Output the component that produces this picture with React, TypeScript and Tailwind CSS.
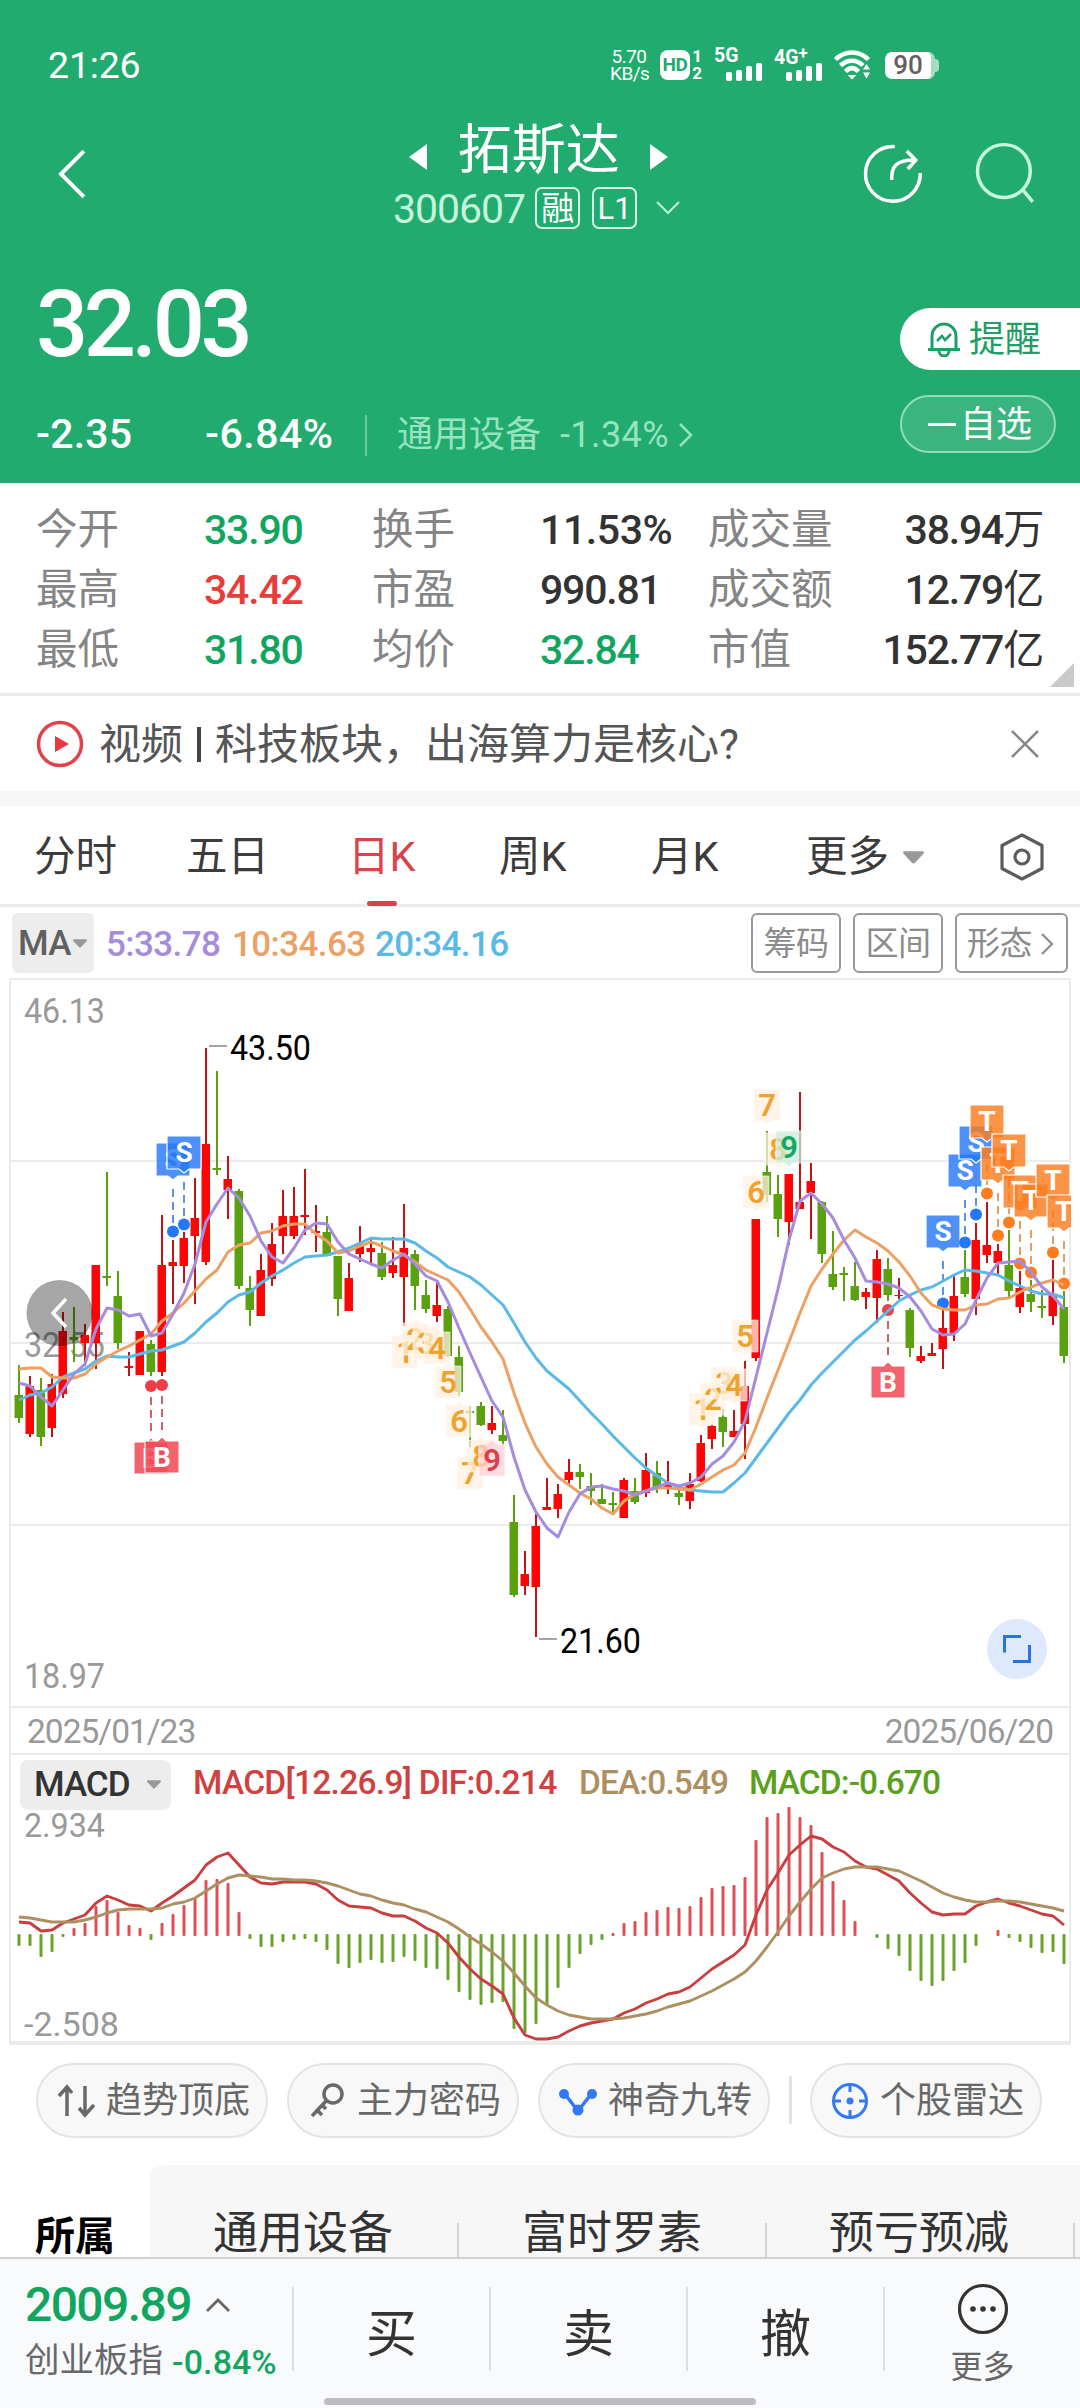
import type { ReactNode } from "react";

const STEP = 11;
const X0 = 19;
const xAt = (i: number) => X0 + i * STEP;

const RED = "#fb0505";
const GREEN = "#5ba00f";

// [direction, high, body top, body bottom, low]
type Candle = ["r" | "g", number, number, number, number];

const candles: Candle[] = [
  ["g", 1365, 1395, 1418, 1423], ["r", 1376, 1386, 1434, 1437], ["g", 1378, 1390, 1437, 1446], ["r", 1374, 1384, 1428, 1437],
  ["r", 1312, 1331, 1394, 1398], ["g", 1307, 1337, 1340, 1362], ["r", 1324, 1335, 1343, 1366], ["r", 1265, 1265, 1343, 1369],
  ["g", 1172, 1276, 1278, 1286], ["g", 1271, 1296, 1343, 1349], ["r", 1352, 1366, 1368, 1376], ["r", 1331, 1331, 1375, 1375],
  ["g", 1340, 1344, 1372, 1376], ["r", 1215, 1265, 1372, 1376], ["r", 1240, 1262, 1266, 1304], ["r", 1232, 1238, 1266, 1283],
  ["r", 1178, 1218, 1236, 1304], ["r", 1048, 1144, 1262, 1265], ["g", 1071, 1168, 1170, 1175], ["r", 1156, 1179, 1190, 1219],
  ["g", 1189, 1191, 1286, 1289], ["g", 1276, 1288, 1310, 1326], ["r", 1254, 1270, 1316, 1316], ["r", 1223, 1244, 1279, 1286],
  ["r", 1190, 1216, 1236, 1254], ["r", 1187, 1216, 1236, 1239], ["r", 1169, 1215, 1217, 1235], ["r", 1205, 1231, 1233, 1252],
  ["g", 1216, 1232, 1256, 1256], ["g", 1256, 1256, 1299, 1316], ["r", 1263, 1278, 1311, 1311], ["r", 1226, 1245, 1254, 1262],
  ["r", 1237, 1248, 1252, 1263], ["g", 1242, 1253, 1277, 1280], ["r", 1237, 1265, 1273, 1278], ["r", 1204, 1248, 1277, 1326],
  ["g", 1250, 1254, 1286, 1310], ["g", 1280, 1295, 1309, 1313], ["r", 1280, 1305, 1316, 1322], ["g", 1306, 1309, 1356, 1357],
  ["g", 1346, 1357, 1392, 1396], ["g", 1406, 1411, 1413, 1447], ["g", 1402, 1406, 1425, 1426], ["r", 1406, 1423, 1430, 1434],
  ["g", 1410, 1435, 1441, 1445], ["g", 1495, 1522, 1595, 1597], ["r", 1551, 1574, 1586, 1595], ["r", 1514, 1526, 1587, 1637],
  ["r", 1478, 1507, 1510, 1510], ["r", 1484, 1494, 1509, 1518], ["r", 1459, 1472, 1480, 1484], ["g", 1464, 1472, 1477, 1489],
  ["g", 1473, 1486, 1491, 1505], ["g", 1484, 1499, 1504, 1504], ["g", 1492, 1503, 1505, 1512], ["r", 1478, 1480, 1518, 1518],
  ["g", 1478, 1491, 1502, 1504], ["r", 1453, 1470, 1493, 1497], ["g", 1461, 1473, 1488, 1493], ["r", 1461, 1485, 1488, 1494],
  ["g", 1486, 1493, 1497, 1505], ["r", 1473, 1484, 1501, 1509], ["r", 1435, 1443, 1481, 1482], ["r", 1424, 1426, 1439, 1449],
  ["g", 1409, 1417, 1432, 1447], ["r", 1410, 1431, 1437, 1437], ["r", 1361, 1386, 1424, 1459], ["r", 1219, 1219, 1358, 1361],
  ["g", 1131, 1172, 1195, 1202], ["g", 1175, 1194, 1219, 1237], ["r", 1174, 1174, 1222, 1245], ["r", 1092, 1202, 1209, 1209],
  ["r", 1163, 1181, 1193, 1239], ["g", 1201, 1202, 1254, 1263], ["g", 1231, 1274, 1287, 1290], ["g", 1267, 1273, 1275, 1301],
  ["g", 1262, 1286, 1300, 1301], ["r", 1288, 1292, 1297, 1309], ["r", 1250, 1259, 1298, 1323], ["g", 1258, 1269, 1295, 1301],
  ["r", 1278, 1295, 1296, 1299], ["g", 1308, 1310, 1348, 1357], ["r", 1346, 1356, 1361, 1363], ["r", 1343, 1353, 1356, 1356],
  ["r", 1307, 1328, 1349, 1369], ["r", 1276, 1296, 1333, 1341], ["g", 1250, 1277, 1294, 1297], ["r", 1223, 1240, 1299, 1315],
  ["r", 1202, 1245, 1255, 1263], ["r", 1244, 1251, 1263, 1275], ["g", 1230, 1265, 1291, 1297], ["r", 1271, 1288, 1307, 1313],
  ["g", 1280, 1294, 1302, 1312], ["g", 1290, 1306, 1308, 1318], ["r", 1260, 1295, 1316, 1325], ["g", 1291, 1307, 1356, 1363],
];

const ma5 = [
  1383, 1386, 1397, 1406, 1390, 1374, 1364, 1329, 1308, 1310, 1316, 1314, 1336, 1333, 1314, 1293, 1264, 1222, 1204, 1188, 1198, 1216, 1241, 1257,
  1263, 1248, 1230, 1223, 1224, 1242, 1254, 1259, 1264, 1268, 1260, 1254, 1264, 1276, 1281, 1302, 1328, 1353, 1377, 1401, 1417, 1457, 1490, 1512,
  1528, 1537, 1512, 1494, 1487, 1486, 1489, 1491, 1495, 1491, 1487, 1483, 1486, 1483, 1477, 1464, 1456, 1442, 1421, 1377, 1333, 1289, 1240, 1201,
  1193, 1204, 1218, 1240, 1258, 1281, 1282, 1284, 1288, 1297, 1311, 1329, 1335, 1334, 1324, 1300, 1278, 1263, 1262, 1261, 1272, 1287, 1296, 1309,
];
const ma10 = [
  1369, 1368, 1368, 1377, 1378, 1378, 1374, 1364, 1357, 1351, 1346, 1340, 1334, 1321, 1313, 1303, 1291, 1279, 1270, 1252, 1245, 1243, 1233, 1231,
  1226, 1224, 1224, 1234, 1241, 1253, 1251, 1246, 1242, 1246, 1251, 1255, 1262, 1270, 1275, 1280, 1292, 1309, 1327, 1342, 1359, 1393, 1423, 1447,
  1464, 1477, 1485, 1493, 1499, 1508, 1514, 1501, 1494, 1491, 1488, 1488, 1489, 1490, 1484, 1477, 1470, 1465, 1453, 1427, 1398, 1370, 1342, 1313,
  1286, 1269, 1254, 1240, 1230, 1237, 1243, 1251, 1262, 1276, 1293, 1305, 1309, 1310, 1310, 1305, 1304, 1299, 1298, 1292, 1287, 1283, 1280, 1285,
];
const ma20 = [
  1400, 1395, 1393, 1387, 1377, 1373, 1369, 1361, 1356, 1357, 1357, 1354, 1351, 1350, 1346, 1342, 1333, 1322, 1313, 1302, 1295, 1292, 1283, 1276,
  1270, 1263, 1257, 1256, 1255, 1252, 1248, 1243, 1238, 1239, 1239, 1239, 1243, 1251, 1258, 1267, 1272, 1277, 1285, 1295, 1305, 1323, 1342, 1358,
  1371, 1380, 1389, 1401, 1413, 1424, 1436, 1447, 1458, 1468, 1476, 1483, 1487, 1490, 1491, 1492, 1492, 1483, 1473, 1458, 1443, 1428, 1413, 1400,
  1385, 1373, 1362, 1351, 1340, 1331, 1321, 1311, 1301, 1295, 1290, 1287, 1281, 1275, 1270, 1271, 1273, 1275, 1281, 1286, 1291, 1294, 1294, 1298,
];

// histogram bar ends, 0 where the day has no bar
const hist = [
  1946, 1946, 1957, 1952, 1937, 1928, 1923, 1906, 1900, 1912, 1925, 1928, 1940, 1923, 1914, 1905, 1898, 1880, 1879, 1883, 1912, 1939, 1947, 1947,
  1942, 1940, 1939, 1942, 1950, 1964, 1968, 1963, 1960, 1963, 1962, 1957, 1961, 1968, 1969, 1980, 1992, 2000, 2005, 2003, 2002, 2029, 2033, 2024,
  2005, 1988, 1968, 1954, 1945, 1940, 1933, 1923, 1921, 1912, 1910, 1907, 1908, 1906, 1897, 1888, 1886, 1885, 1877, 1840, 1817, 1813, 1807, 1817,
  1825, 1852, 1881, 1900, 1921, 0, 1938, 1949, 1956, 1971, 1981, 1986, 1981, 1971, 1963, 1946, 0, 1930, 1938, 1942, 1948, 1953, 1952, 1964,
];
const dif = [
  1922, 1923, 1931, 1930, 1923, 1919, 1915, 1903, 1896, 1900, 1905, 1906, 1911, 1903, 1896, 1888, 1880, 1865, 1857, 1853, 1865, 1877, 1883, 1884,
  1882, 1882, 1882, 1884, 1890, 1900, 1906, 1907, 1908, 1913, 1916, 1916, 1921, 1928, 1933, 1943, 1957, 1969, 1979, 1986, 1994, 2018, 2035, 2039,
  2039, 2037, 2031, 2026, 2023, 2021, 2019, 2013, 2009, 2003, 1999, 1994, 1992, 1987, 1978, 1969, 1962, 1955, 1945, 1915, 1890, 1873, 1855, 1845,
  1836, 1839, 1847, 1852, 1861, 1867, 1869, 1875, 1881, 1893, 1903, 1912, 1915, 1914, 1914, 1906, 1902, 1899, 1903, 1906, 1910, 1914, 1916, 1925,
];
const dea = [
  1917, 1918, 1920, 1922, 1922, 1922, 1920, 1917, 1913, 1910, 1909, 1909, 1909, 1908, 1904, 1902, 1898, 1891, 1884, 1878, 1875, 1876, 1877, 1879,
  1879, 1880, 1880, 1881, 1883, 1886, 1890, 1894, 1896, 1900, 1903, 1905, 1909, 1912, 1917, 1922, 1929, 1937, 1944, 1952, 1961, 1973, 1986, 1998,
  2005, 2011, 2015, 2017, 2019, 2019, 2019, 2018, 2016, 2014, 2011, 2007, 2004, 2001, 1996, 1991, 1985, 1979, 1972, 1961, 1947, 1932, 1916, 1902,
  1889, 1878, 1873, 1869, 1867, 1867, 1867, 1869, 1871, 1876, 1881, 1887, 1893, 1897, 1900, 1902, 1902, 1901, 1901, 1902, 1904, 1906, 1908, 1911,
];

const toPoints = (ys: number[]) => ys.map((y, i) => `${xAt(i)},${y}`).join(" ");

// nine-turn counters: [digit, x, centre y]
const turnsDown: [string, number, number][] = [
  ["1", 405, 1352], ["2", 415, 1339], ["3", 426, 1343], ["4", 437, 1348], ["5", 448, 1382],
  ["6", 459, 1421], ["7", 470, 1473], ["8", 481, 1456], ["9", 492, 1460],
];
const turnsUp: [string, number, number][] = [
  ["1", 702, 1409], ["2", 713, 1399], ["3", 724, 1383], ["4", 734, 1385], ["5", 745, 1336],
  ["6", 756, 1192], ["7", 767, 1105], ["8", 778, 1149], ["9", 789, 1147],
];

// trades drawn above the candles: [letter, x, flag top]
const flags: ["S" | "T", number, number][] = [
  ["S", 173, 1143], ["S", 184, 1136], ["S", 943, 1215], ["S", 965, 1154], ["S", 976, 1126], ["T", 987, 1105], ["T", 998, 1147],
  ["T", 1009, 1134], ["T", 1020, 1175], ["T", 1031, 1184], ["T", 1053, 1164], ["T", 1064, 1195],
];
// trades below: [x, dot y, flag top]
const buys = [[151, 1386, 1442], [162, 1385, 1441], [888, 1310, 1366]];

function Turn({ d, x, y, up }: { d: string; x: number; y: number; up?: boolean }) {
  const nine = d === "9";
  const bg = nine ? (up ? "#c9ecdb" : "#ffd0d4") : "#fff0df";
  const fg = nine ? (up ? "#12a862" : "#dc3f4c") : "#f0a22e";
  const tip = up
    ? `M${x - 13} ${y - 16}h26v32h-9l-4 4l-4 -4h-9z`
    : `M${x - 13} ${y + 16}h26v-32h-9l-4 -4l-4 4h-9z`;
  return (
    <g>
      <path d={tip} fill={bg} fillOpacity="0.75" stroke="#fff" strokeOpacity="0.6" />
      <text x={x} y={y + 11} fill={fg} fontSize="31" fontWeight="600" textAnchor="middle">{d}</text>
    </g>
  );
}

function KLine() {
  return (
    <svg className="block h-[728px] w-full" viewBox="0 978 1080 728" fontFamily='Roboto, "Liberation Sans", sans-serif'>
      <clipPath id="plot">
        <rect x="10" y="978" width="1061" height="728" />
      </clipPath>
      <g stroke="#ebebeb" strokeWidth="2" fill="none">
        <path d="M10 979H1070M10 1161H1070M10 1343H1070M10 1525H1070M10 978V1706M1070 978V1706" />
      </g>
      <g fill="#999" fontSize="34.5">
        <text x="24" y="1023" textLength="81" lengthAdjust="spacingAndGlyphs">46.13</text>
        <text x="24" y="1357" textLength="81" lengthAdjust="spacingAndGlyphs">32.55</text>
        <text x="24" y="1688" textLength="81" lengthAdjust="spacingAndGlyphs">18.97</text>
      </g>

      <g clipPath="url(#plot)">
        {candles.map(([dir, hi, top, bottom, lo], i) => (
          <g key={i}>
            <rect x={xAt(i) - 1} y={hi} width="2" height={lo - hi} fill={dir === "r" ? "#c11414" : GREEN} />
            <rect x={xAt(i) - 4.5} y={top} width="8.5" height={bottom - top} fill={dir === "r" ? RED : GREEN} />
          </g>
        ))}

        <circle cx="59.5" cy="1313" r="33" fill="#000" fillOpacity="0.35" />
        <path d="M66 1299L53 1313L66 1327" stroke="#fff" strokeWidth="3.5" fill="none" />

        <g stroke="#888" strokeWidth="1.5">
          <path d="M209 1046H227M539 1639H557" />
        </g>
        <g fill="#000" fontSize="34.5">
          <text x="230" y="1060" textLength="81" lengthAdjust="spacingAndGlyphs">43.50</text>
          <text x="560" y="1653" textLength="81" lengthAdjust="spacingAndGlyphs">21.60</text>
        </g>

        {turnsDown.map(([d, x, y]) => <Turn key={x} d={d} x={x} y={y} />)}
        {turnsUp.map(([d, x, y]) => <Turn key={x} d={d} x={x} y={y} up />)}

        {buys.map(([x, dot, top]) => (
          <g key={x}>
            <circle cx={x} cy={dot} r="6" fill="#ec3e48" />
            <path d={`M${x} ${dot + 11}V${top - 6}`} stroke="#c9525b" strokeWidth="1.8" strokeDasharray="8 5" />
            <path d={`M${x - 17} ${top}h13l4 -4l4 4h13v32h-34z`} fill="#f04a55" fillOpacity="0.86" stroke="#fff" strokeWidth="1" />
            <text x={x} y={top + 26} fill="#fff" fontSize="28" fontWeight="700" textAnchor="middle">B</text>
          </g>
        ))}
        {flags.map(([letter, x, top]) => {
          const color = letter === "S" ? "#2478f6" : "#fb7d1e";
          return (
            <g key={x}>
              <path d={`M${x} ${top + 46}v36`} stroke={letter === "S" ? "#4b8ae0" : "#e39355"} strokeWidth="1.8" strokeDasharray="8 5" />
              <circle cx={x} cy={top + 88.5} r="6" fill={color} />
              <path d={`M${x - 17} ${top}h34v33h-12l-5 4l-5 -4h-12z`} fill={color} fillOpacity="0.82" stroke="#fff" strokeWidth="1.2" />
              <text x={x} y={top + 26} fill="#fff" fontSize="28" fontWeight="700" textAnchor="middle">{letter}</text>
            </g>
          );
        })}
        <g fill="none" strokeWidth="3" strokeLinejoin="round">
          <polyline points={toPoints(ma20)} stroke="#5ab9e6" />
          <polyline points={toPoints(ma10)} stroke="#eda063" />
          <polyline points={toPoints(ma5)} stroke="#a58cdc" />
        </g>
      </g>

      <circle cx="1017" cy="1649" r="30" fill="#dfe9fd" />
      <path d="M1004.500 1652.500V1636.500H1021M1029.500 1645V1661.500H1013" stroke="#2d72e4" strokeWidth="3" fill="none" />
    </svg>
  );
}

function Macd() {
  return (
    <svg className="block h-[231px] w-full overflow-visible" viewBox="0 1810 1080 231" fontFamily='Roboto, "Liberation Sans", sans-serif'>
      <g fill="#999" fontSize="33.500">
        <text x="24" y="1837" textLength="81" lengthAdjust="spacingAndGlyphs">2.934</text>
        <text x="24" y="2036" textLength="95" lengthAdjust="spacingAndGlyphs">-2.508</text>
      </g>
      {hist.map((y, i) =>
        y === 0 ? null : y < 1935 ? (
          <rect key={i} x={xAt(i) - 1.5} y={y} width="3" height={1936 - y} rx="1" fill="#dd5055" />
        ) : (
          <rect key={i} x={xAt(i) - 1.5} y="1934" width="3" height={y - 1934} rx="1" fill="#68a42c" />
        )
      )}
      <g fill="none" strokeWidth="2.900" strokeLinejoin="round">
        <polyline points={toPoints(dif)} stroke="#c93f3f" />
        <polyline points={toPoints(dea)} stroke="#ad8f62" />
      </g>
    </svg>
  );
}

function SignalBars() {
  return (
    <svg className="ml-[12px] h-[18px] w-[36px]" viewBox="0 0 36 18" fill="#fff">
      <rect x="0" y="9" width="6" height="9" rx="2" />
      <rect x="10" y="7" width="6" height="11" rx="2" />
      <rect x="20" y="3" width="6" height="15" rx="2" />
      <rect x="30" y="0" width="6" height="18" rx="2" />
    </svg>
  );
}

function StatusBar() {
  return (
    <div className="flex h-[130px] items-center pr-[141px] pl-[48px]">
      <span className="text-[37.500px] tracking-[-0.200px]">21:26</span>
      <div className="ml-auto flex items-center">
        <div className="w-[38px] text-center text-[19px] leading-[17px] tracking-[-0.500px] whitespace-nowrap">
          5.70
          <br />
          KB/s
        </div>
        <div className="ml-[12px] flex h-[30px] w-[30px] items-center justify-center rounded-[8px] bg-white text-[19px] font-bold tracking-[-0.500px] text-[#22ab6e]">HD</div>
        <div className="ml-[2px] w-[10px] text-right text-[17px] leading-[17px] font-bold">1<br />2</div>
        <div className="ml-[12px] flex h-[31px] w-[48px] flex-col">
          <span className="h-[13px] text-[19.500px] leading-[12px] font-bold">5G</span>
          <SignalBars />
        </div>
        <div className="ml-[12px] flex h-[31px] w-[48px] flex-col">
          <span className="h-[13px] text-[19.500px] leading-[12px] font-bold whitespace-nowrap">4G<sup className="top-[-5px] text-[17px] leading-none">+</sup></span>
          <SignalBars />
        </div>
        <svg className="ml-[12px] h-[30px] w-[38px]" viewBox="0 0 38 30" fill="none" stroke="#fff" strokeWidth="4.500">
          <path d="M1.500 9.500C11 0 25 0 34.500 9.500" />
          <path d="M6.500 15.500C13.500 9 22.500 9 29 15.500" />
          <path d="M11.500 21.500C16 17 20 17 24.500 21.500" />
          <path d="M18 29.500L13.500 25H22.500Z" fill="#fff" stroke="none" />
          <path d="M32.500 14L29 19.500H36ZM32.500 28.500L29 22.500H36Z" fill="#fff" stroke="none" />
        </svg>
        <div className="ml-[13px] flex h-[27px] w-[50px] items-center justify-center rounded-[7px] border-r-[4px] border-[#a6dcc4] bg-white text-[26px] leading-none font-medium text-[#656060]">90</div>
        <div className="h-[13px] w-[4px] rounded-r bg-[#a6dcc4]" />
      </div>
    </div>
  );
}

function Header() {
  return (
    <header className="h-[483px] bg-[#22ab6e] text-white">
      <StatusBar />
      <div className="flex h-[110px] pr-[43px] pl-[57px]">
        <svg className="mt-[19px] h-[50px] w-[30px]" viewBox="0 0 30 50" fill="none" stroke="#fff" strokeWidth="4">
          <path d="M27 2L4 25L27 48" />
        </svg>
        <div className="ml-[297px] w-[310px]">
          <div className="flex h-[42px] items-center justify-center">
            <svg className="mt-[11px] h-[26px] w-[18px]" viewBox="0 0 18 26" fill="#fff"><path d="M18 0V26L0 13Z" /></svg>
            <span className="mr-[30px] ml-[31px] text-[54px] leading-[42px]">拓斯达</span>
            <svg className="mt-[11px] h-[26px] w-[18px]" viewBox="0 0 18 26" fill="#fff"><path d="M0 0V26L18 13Z" /></svg>
          </div>
          <div className="mt-[14px] flex h-[44px] items-center pl-[9px]">
            <span className="pt-[4px] text-[41px] tracking-[-1px] text-[#c5f3db]">300607</span>
            <span className="ml-[10px] flex h-[42px] w-[45px] items-center justify-center rounded-[7px] border-2 border-[#d5f5e5] text-[33px] leading-none">融</span>
            <span className="ml-[12px] flex h-[42px] w-[45px] items-center justify-center rounded-[7px] border-2 border-[#d5f5e5] text-[31px] leading-none">L1</span>
            <svg className="ml-[18px] h-[14px] w-[26px]" viewBox="0 0 26 14" fill="none" stroke="#bdf0d6" strokeWidth="2.200"><path d="M2 1L13 12L24 1" /></svg>
          </div>
        </div>
        <svg className="mt-[12px] ml-[169px] h-[62px] w-[62px]" viewBox="0 0 62 62" fill="none" stroke="#fff" strokeWidth="3.500">
          <path d="M33 4.500A27.500 27.500 0 1 0 58.500 31" />
          <path d="M30 38C29 25 34 18 52 18M45 9L54 18L46 27" />
        </svg>
        <svg className="mt-[12px] ml-[52px] h-[62px] w-[62px]" viewBox="0 0 62 62" fill="none" stroke="#c5f7dd" strokeWidth="3.500">
          <circle cx="29" cy="29" r="26.500" />
          <path d="M48 48L58 60" />
        </svg>
      </div>
      <div className="flex h-[243px] justify-between">
        <div className="pl-[36px]">
          <div className="mt-[37px] h-[96px] text-[92px] leading-[96px] font-medium tracking-[-4.500px]">32.03</div>
          <div className="mt-[37px] flex h-[50px] items-center font-medium">
            <span className="w-[169px] text-[41px] tracking-[0.200px]">-2.35</span>
            <span className="w-[160px] text-[41px] tracking-[0.500px]">-6.84%</span>
            <span className="h-[41px] w-[2px] bg-[#6cc9a0]" />
            <span className="ml-[30px] flex items-center font-normal text-[#97e2bf]">
              <span className="text-[36px] leading-none">通用设备</span>
              <span className="ml-[19px] text-[36px] tracking-[0.400px]">-1.34%</span>
              <svg className="ml-[10px] h-[24px] w-[14px]" viewBox="0 0 14 24" fill="none" stroke="#97e2bf" strokeWidth="2.500"><path d="M1 1L12 12L1 23" /></svg>
            </span>
          </div>
        </div>
        <div className="flex w-[180px] flex-col pt-[68px]">
          <div className="flex h-[62px] items-center rounded-l-full bg-white pl-[27px] text-[#209e65]">
            <svg className="h-[36px] w-[34px]" viewBox="0 0 34 36" fill="none" stroke="#209e65" strokeWidth="3">
              <path d="M5 28V15A12 12 0 0 1 29 15V28M1 28.500H33M12 30A5 5 0 0 0 22 30" />
              <path d="M10 20L15 15L18 19L24 13" strokeWidth="2.500" />
            </svg>
            <span className="ml-[8px] pt-[2px] text-[36px] leading-none">提醒</span>
          </div>
          <div className="mt-[25px] flex h-[58px] w-[156px] items-center rounded-full border-2 border-[#8fdcb9] bg-[#3ab57f] pl-[26px]">
            <span className="h-[3px] w-[28px] bg-white" />
            <span className="ml-[4px] pt-[2px] text-[36px] leading-none">自选</span>
          </div>
        </div>
      </div>
    </header>
  );
}

const quoteRows = [
  { a: ["今开", "33.90", "text-[#10a65f]"], b: ["换手", "11.53%", "text-[#333]"], c: ["成交量", "38.94万"] },
  { a: ["最高", "34.42", "text-[#ea3d3b]"], b: ["市盈", "990.81", "text-[#333]"], c: ["成交额", "12.79亿"] },
  { a: ["最低", "31.80", "text-[#10a65f]"], b: ["均价", "32.84", "text-[#10a65f]"], c: ["市值", "152.77亿"] },
];

function Quotes() {
  return (
    <section className="relative h-[213px] border-b-[3px] border-[#ebebeb] pt-[17px] pr-[37px] pl-[36px] text-[41px]">
      {quoteRows.map((row) => (
        <div key={row.a[0]} className="flex h-[60px] items-center leading-none font-medium tracking-[-1.200px]">
          <span className="w-[168px] text-[41.500px] font-normal tracking-normal text-[#858585]">{row.a[0]}</span>
          <span className={`w-[168px] ${row.a[2]}`}>{row.a[1]}</span>
          <span className="w-[168px] text-[41.500px] font-normal tracking-normal text-[#858585]">{row.b[0]}</span>
          <span className={`w-[168px] ${row.b[1].endsWith("%") ? "tracking-[-0.400px]" : ""} ${row.b[2]}`}>{row.b[1]}</span>
          <span className="text-[41.500px] font-normal tracking-normal text-[#858585]">{row.c[0]}</span>
          <span className="ml-auto text-[#333]">
            {row.c[1].slice(0, -1)}
            <span className="font-normal">{row.c[1].slice(-1)}</span>
          </span>
        </div>
      ))}
      <svg className="absolute right-[6px] bottom-[6px] h-[24px] w-[24px]" viewBox="0 0 24 24"><path d="M24 0V24H0Z" fill="#c9c9c9" /></svg>
    </section>
  );
}

function News() {
  return (
    <section className="flex h-[110px] items-center border-b-[15px] border-[#f7f7f7] pr-[41px] pl-[36px]">
      <svg className="h-[48px] w-[48px]" viewBox="0 0 48 48">
        <circle cx="24" cy="24" r="21.500" fill="none" stroke="#e0434b" strokeWidth="3.500" />
        <path d="M19 16V32L33 24Z" fill="#ea3841" />
      </svg>
      <span className="ml-[15px] flex items-center pt-[2px] text-[42px] leading-none text-[#555]">
        视频<i className="mx-[14px] h-[35px] w-[4px] bg-[#444]" />科技板块，出海算力是核心?
      </span>
      <svg className="ml-auto h-[28px] w-[28px]" viewBox="0 0 28 28" stroke="#888" strokeWidth="2.500"><path d="M1 1L27 27M27 1L1 27" /></svg>
    </section>
  );
}

function Caret({ className }: { className: string }) {
  return <svg className={className} viewBox="0 0 20 12" fill="#999"><path d="M1 0H19Q21 1 19 3L11.500 11Q10 12.500 8.500 11L1 3Q-1 1 1 0Z" /></svg>;
}

function Tabs() {
  return (
    <nav className="flex h-[101px] items-center border-b-[3px] border-[#ebebeb] pt-[4px] pl-[34px] text-[41.500px] leading-none text-[#3c3c3c]">
      <span className="w-[152px]">分时</span>
      <span className="w-[162px]">五日</span>
      <span className="relative flex h-[94px] w-[151px] items-center text-[#d8444c]">
        日K
        <i className="absolute bottom-[-2px] left-[19px] h-[5px] w-[30px] rounded-full bg-[#d0444c]" />
      </span>
      <span className="w-[152px]">周K</span>
      <span className="w-[155px]">月K</span>
      <span>更多</span>
      <Caret className="ml-[14px] h-[13px] w-[21px]" />
      <svg className="ml-[76px] h-[48px] w-[44px]" viewBox="0 0 44 48" fill="none" stroke="#5c5c5c" strokeWidth="3.200">
        <path d="M22 2L42 12.500V35.500L22 46L2 35.500V12.500Z" strokeLinejoin="round" />
        <circle cx="22" cy="24" r="7" />
      </svg>
    </nav>
  );
}

function MaRow() {
  return (
    <div className="flex h-[71px] items-center pr-[12px] pl-[12px] text-[35px] leading-none font-medium tracking-[-0.600px]">
      <span className="flex h-[60px] w-[82px] items-center rounded-[6px] bg-[#ededed] pt-[2px] pl-[6px] text-[#606060]">
        MA
        <Caret className="ml-[2px] h-[9px] w-[14px]" />
      </span>
      <span className="ml-[12px] w-[126px] pt-[3px] text-[#a58cdc]">5:33.78</span>
      <span className="w-[143px] pt-[3px] text-[#eda063]">10:34.63</span>
      <span className="pt-[3px] text-[#5ab9e6]">20:34.16</span>
      <div className="ml-auto flex gap-[12px] text-[33px] font-normal text-[#8c8c8c]">
        <span className="flex h-[60px] w-[90px] items-center justify-center rounded-[6px] border-2 border-[#989898] pt-[2px]">筹码</span>
        <span className="flex h-[60px] w-[90px] items-center justify-center rounded-[6px] border-2 border-[#989898] pt-[2px]">区间</span>
        <span className="flex h-[60px] w-[113px] items-center rounded-[6px] border-2 border-[#989898] pt-[2px] pl-[10px]">
          形态
          <svg className="ml-[9px] h-[22px] w-[13px]" viewBox="0 0 13 22" fill="none" stroke="#8c8c8c" strokeWidth="2.200"><path d="M1 1L11 11L1 21" /></svg>
        </span>
      </div>
    </div>
  );
}

function Pill({ icon, children }: { icon: ReactNode; children: string }) {
  return (
    <div className="flex h-[75px] w-[232px] items-center rounded-full border-2 border-[#e3e3e3] bg-[#f8f8f8] pl-[19px] text-[36px] leading-none text-[#686868]">
      <svg className="mr-[11px] h-[38px] w-[38px]" viewBox="0 0 38 38" fill="none" stroke="#686868" strokeWidth="3.500">{icon}</svg>
      {children}
    </div>
  );
}

function Tools() {
  return (
    <div className="flex pt-[18px] pl-[36px]">
      <Pill icon={<path d="M10 34V5M2 14L10 5L15 11M28 4V33M22 26L28 33L37 23" />}>趋势顶底</Pill>
      <span className="w-[19px]" />
      <Pill icon={<><circle cx="25" cy="12" r="9" /><path d="M19 18L4 34M8 27L14 33M13 22L18 27" /></>}>主力密码</Pill>
      <span className="w-[19px]" />
      <Pill icon={<><path d="M5 11L19 29L33 11" stroke="#3478f6" /><g fill="#3478f6" stroke="none"><circle cx="5" cy="12" r="5" /><circle cx="33" cy="12" r="5" /><circle cx="19" cy="28" r="5.500" /></g></>}>神奇九转</Pill>
      <span className="mr-[18px] ml-[19px] mt-[13px] h-[48px] w-[3px] bg-[#e2e2e2]" />
      <Pill icon={<><path d="M19 2V10M19 28V36M2 19H10M28 19H36" stroke="#3478f6" strokeWidth="3" /><circle cx="19" cy="19" r="16.500" stroke="#3478f6" strokeWidth="3" /><circle cx="19" cy="19" r="3.500" fill="#3478f6" stroke="none" /></>}>个股雷达</Pill>
    </div>
  );
}

function Sectors() {
  return (
    <div className="mt-[27px] flex h-[92px] overflow-hidden text-[45px] leading-none text-[#333]">
      <span className="w-[150px] pt-[52px] pl-[35px] text-[40px] font-bold text-black">所属</span>
      <div className="flex flex-1 rounded-tl-[12px] bg-[#f7f7f7] pt-[46px]">
        <span className="w-[307px] pl-[63px]">通用设备</span>
        <i className="mt-[12px] h-[40px] w-[2px] bg-[#d4d4d4]" />
        <span className="w-[306px] pl-[63px]">富时罗素</span>
        <i className="mt-[12px] h-[40px] w-[2px] bg-[#d4d4d4]" />
        <span className="w-[306px] pl-[62px]">预亏预减</span>
        <i className="mt-[12px] h-[40px] w-[2px] bg-[#d4d4d4]" />
      </div>
    </div>
  );
}

function BottomBar() {
  return (
    <footer className="flex h-[151px] flex-col border-t-2 border-[#d2d2d2] bg-[#f9fafc]">
      <div className="flex h-[139px] items-center">
        <div className="h-[120px] w-[292px] pl-[25px]">
          <div className="flex h-[56px] items-center pt-[17px] text-[48px] leading-none font-medium tracking-[-1.600px] text-[#10a65f]">
            2009.89
            <svg className="ml-[14px] h-[14px] w-[26px]" viewBox="0 0 26 14" fill="none" stroke="#666" strokeWidth="2.800"><path d="M2 13L13 2L24 13" /></svg>
          </div>
          <div className="mt-[18px] flex items-center text-[34.500px] leading-none text-[#68686c]">
            创业板指
            <span className="ml-[9px] pt-[2px] text-[34px] font-medium tracking-[0.100px] text-[#10a65f]">-0.84%</span>
          </div>
        </div>
        {["买", "卖", "撤"].map((label) => (
          <div key={label} className="flex h-[84px] w-[197px] items-center justify-center border-l-2 border-[#dcdde0] pt-[12px] text-[51px] leading-none text-[#333]">{label}</div>
        ))}
        <div className="flex h-[84px] flex-1 flex-col items-center justify-center border-l-2 border-[#dcdde0] pt-[8px] text-[32px] leading-none text-[#666]">
          <svg className="h-[52px] w-[52px] shrink-0" viewBox="0 0 52 52" fill="#333">
            <circle cx="26" cy="26" r="23.500" fill="none" stroke="#333" strokeWidth="3.200" />
            <circle cx="16" cy="26" r="2.800" /><circle cx="26" cy="26" r="2.800" /><circle cx="36" cy="26" r="2.800" />
          </svg>
          <span className="mt-[16px]">更多</span>
        </div>
      </div>
      <div className="mx-auto h-[7px] w-[432px] rounded-full bg-[#bdbdbf]" />
    </footer>
  );
}

export default function App() {
  return (
    <div className="flex h-[2408px] w-[1080px] flex-col overflow-hidden bg-white font-[Roboto,'Noto_Sans_CJK_SC',sans-serif]">
      <Header />
      <Quotes />
      <News />
      <Tabs />
      <MaRow />
      <KLine />
      <div className="mx-[9px] flex h-[49px] items-center justify-between border-2 border-[#ebebeb] px-[16px] pt-[2px] text-[33.500px] leading-none tracking-[-1px] text-[#999]">
        <span>2025/01/23</span>
        <span>2025/06/20</span>
      </div>
      <div className="relative mx-[9px] h-[290px] border-x-2 border-b-4 border-[#ebebeb]">
        <div className="flex h-[55px] items-center pt-[1px] pl-[9px] text-[33.500px] leading-none font-medium tracking-[-0.900px] whitespace-pre">
          <span className="mt-[3px] flex h-[50px] w-[151px] items-center rounded-[8px] bg-[#ededed] pl-[14px] text-[35px] tracking-[-1px] text-[#333]">
            MACD
            <Caret className="ml-[17px] h-[9px] w-[14px]" />
          </span>
          <span className="ml-[22px] w-[386px] tracking-[-0.700px] text-[#d0403f]">MACD[12.26.9] DIF:0.214</span>
          <span className="w-[170px] text-[#ad8f62]">DEA:0.549</span>
          <span className="text-[#5ba01c]">MACD:-0.670</span>
        </div>
        <div className="-mx-[11px]">
          <Macd />
        </div>
      </div>
      <Tools />
      <Sectors />
      <BottomBar />
    </div>
  );
}
